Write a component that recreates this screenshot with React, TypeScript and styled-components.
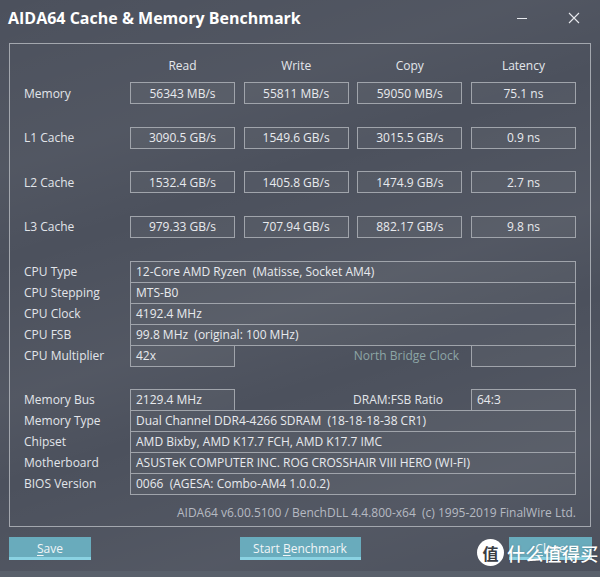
import styled, { createGlobalStyle } from "styled-components"

const GlobalStyle = createGlobalStyle`
    html, body {
        margin: 0;
        padding: 0;
        background: #4d525e;
    }
    body {
        font-family: "Open Sans", "Noto Sans", sans-serif;
    }
`

const Window = styled.div`
    position: relative;
    width: 600px;
    height: 577px;
    overflow: hidden;
    display: flex;
    flex-direction: column;
    color: #e2e5ea;
    font-size: 12px;
    background:
        linear-gradient(162deg, rgba(255,255,255,0) 0%, rgba(255,255,255,0.035) 22%, rgba(255,255,255,0) 34%,
            rgba(255,255,255,0.04) 52%, rgba(255,255,255,0) 63%, rgba(255,255,255,0.045) 82%, rgba(255,255,255,0) 100%),
        #4c515d;
`

const TitleBar = styled.div`
    height: 43px;
    display: flex;
    align-items: flex-start;
    padding: 7px 0 0 8px;
    box-sizing: border-box;
`

const Title = styled.h1`
    flex: 1;
    margin: 0;
    font-size: 16px;
    line-height: 22px;
    font-weight: 700;
    color: #ffffff;
`

const WinButton = styled.div`
    width: 52px;
    height: 22px;
    display: flex;
    align-items: center;
    justify-content: center;
`

const Panel = styled.div`
    margin: 0 9px;
    height: 484px;
    border: 1px solid #a3a7ae;
    box-sizing: border-box;
    padding: 14px 14px 0 14px;
    display: flex;
    flex-direction: column;
`

/* label column + four value columns; the gap after the label is part of its 106px */
const benchColumns = `
    display: grid;
    grid-template-columns: 97.33px repeat(4, 105px);
    column-gap: 8.67px;
`

const HeadRow = styled.div`
    ${benchColumns}
    height: 16px;
    line-height: 16px;
    margin-bottom: 8px;
`

const HeadCell = styled.div`
    text-align: center;
    color: #e4e7ec;
`

const BenchRows = styled.div`
    display: flex;
    flex-direction: column;
    gap: 22.6px;
`

const BenchRow = styled.div`
    ${benchColumns}
    height: 22px;
    align-items: center;
`

const Label = styled.div`
    color: #e2e5ea;
    white-space: nowrap;
`

const ValueBox = styled.div`
    height: 22px;
    box-sizing: border-box;
    border: 1px solid #a0a4ab;
    background: rgba(255,255,255,0.045);
    display: flex;
    align-items: center;
    justify-content: center;
    color: #e8eaee;
    white-space: nowrap;
`

const InfoTable = styled.div<{ $top: number }>`
    display: flex;
    flex-direction: column;
    margin-top: ${p => p.$top}px;
`

const InfoRow = styled.div`
    display: grid;
    grid-template-columns: 106px 105px 1fr 105px;
    height: 22px;
    align-items: center;
    & + & {
        margin-top: -1px;
    }
`

const InfoCell = styled.div<{ $span?: boolean }>`
    grid-column: ${p => (p.$span ? "2 / 5" : "auto")};
    height: 22px;
    box-sizing: border-box;
    border: 1px solid #a0a4ab;
    background: rgba(255,255,255,0.045);
    display: flex;
    align-items: center;
    padding-left: 5px;
    color: #e8eaee;
    white-space: nowrap;
`

const SideLabel = styled.div<{ $muted?: boolean; $pad: number }>`
    text-align: right;
    padding-right: ${p => p.$pad}px;
    color: ${p => (p.$muted ? "#8da6a6" : "#e2e5ea")};
    white-space: nowrap;
`

const Footer = styled.div`
    flex: 1;
    display: flex;
    align-items: center;
    justify-content: flex-end;
    padding-top: 4px;
    color: #b6bac2;
    white-space: nowrap;
`

const ButtonBar = styled.div`
    display: flex;
    justify-content: space-between;
    padding: 10px 8px 0 9px;
`

const Button = styled.div<{ $w: number }>`
    width: ${p => p.$w}px;
    height: 23px;
    box-sizing: border-box;
    background: #69abbc;
    border-bottom: 3px solid #8ad2e2;
    display: flex;
    align-items: center;
    justify-content: center;
    padding-top: 2px;
    color: #f1f5f7;
    font-size: 12px;
    u {
        text-decoration-thickness: 1px;
        text-underline-offset: 2px;
    }
`

const BottomEdge = styled.div`
    margin-top: auto;
    height: 6px;
    background: #59606b;
`

const Watermark = styled.div`
    position: absolute;
    left: 477px;
    top: 539px;
    display: flex;
    align-items: center;
    gap: 3px;
`

const Badge = styled.div`
    width: 27px;
    height: 27px;
    border-radius: 50%;
    background: #ffffff;
    color: #3a3d44;
    display: flex;
    align-items: center;
    justify-content: center;
    font-family: "Noto Sans CJK SC", sans-serif;
    font-size: 16px;
    font-weight: 700;
`

const WatermarkText = styled.div`
    font-family: "Noto Sans CJK SC", sans-serif;
    font-size: 18px;
    font-weight: 500;
    color: #ffffff;
    letter-spacing: 0.3px;
    text-shadow: 0 0 2px rgba(0,0,0,0.25);
`

const benchRows = [
    { name: "Memory", vals: ["56343 MB/s", "55811 MB/s", "59050 MB/s", "75.1 ns"] },
    { name: "L1 Cache", vals: ["3090.5 GB/s", "1549.6 GB/s", "3015.5 GB/s", "0.9 ns"] },
    { name: "L2 Cache", vals: ["1532.4 GB/s", "1405.8 GB/s", "1474.9 GB/s", "2.7 ns"] },
    { name: "L3 Cache", vals: ["979.33 GB/s", "707.94 GB/s", "882.17 GB/s", "9.8 ns"] },
]

const App = (): JSX.Element => {
    return (
        <>
            <GlobalStyle />
            <Window>
                <TitleBar>
                    <Title>AIDA64 Cache &amp; Memory Benchmark</Title>
                    <WinButton>
                        <svg width="12" height="12" viewBox="0 0 12 12">
                            <line x1="1" y1="6.5" x2="11" y2="6.5" stroke="#e8eaee" strokeWidth="1" />
                        </svg>
                    </WinButton>
                    <WinButton>
                        <svg width="12" height="12" viewBox="0 0 12 12">
                            <path d="M1 1 L11 11 M11 1 L1 11" stroke="#e8eaee" strokeWidth="1.1" />
                        </svg>
                    </WinButton>
                </TitleBar>

                <Panel>
                    <HeadRow>
                        <span />
                        <HeadCell>Read</HeadCell>
                        <HeadCell>Write</HeadCell>
                        <HeadCell>Copy</HeadCell>
                        <HeadCell>Latency</HeadCell>
                    </HeadRow>
                    <BenchRows>
                        {benchRows.map(r => (
                            <BenchRow key={r.name}>
                                <Label>{r.name}</Label>
                                {r.vals.map((v, i) => (
                                    <ValueBox key={i}>{v}</ValueBox>
                                ))}
                            </BenchRow>
                        ))}
                    </BenchRows>

                    <InfoTable $top={23}>
                        <InfoRow>
                            <Label>CPU Type</Label>
                            <InfoCell $span>12-Core AMD Ryzen&nbsp; (Matisse, Socket AM4)</InfoCell>
                        </InfoRow>
                        <InfoRow>
                            <Label>CPU Stepping</Label>
                            <InfoCell $span>MTS-B0</InfoCell>
                        </InfoRow>
                        <InfoRow>
                            <Label>CPU Clock</Label>
                            <InfoCell $span>4192.4 MHz</InfoCell>
                        </InfoRow>
                        <InfoRow>
                            <Label>CPU FSB</Label>
                            <InfoCell $span>99.8 MHz&nbsp; (original: 100 MHz)</InfoCell>
                        </InfoRow>
                        <InfoRow>
                            <Label>CPU Multiplier</Label>
                            <InfoCell>42x</InfoCell>
                            <SideLabel $muted $pad={12}>North Bridge Clock</SideLabel>
                            <InfoCell />
                        </InfoRow>
                    </InfoTable>

                    <InfoTable $top={22}>
                        <InfoRow>
                            <Label>Memory Bus</Label>
                            <InfoCell>2129.4 MHz</InfoCell>
                            <SideLabel $pad={28}>DRAM:FSB Ratio</SideLabel>
                            <InfoCell>64:3</InfoCell>
                        </InfoRow>
                        <InfoRow>
                            <Label>Memory Type</Label>
                            <InfoCell $span>Dual Channel DDR4-4266 SDRAM&nbsp; (18-18-18-38 CR1)</InfoCell>
                        </InfoRow>
                        <InfoRow>
                            <Label>Chipset</Label>
                            <InfoCell $span>AMD Bixby, AMD K17.7 FCH, AMD K17.7 IMC</InfoCell>
                        </InfoRow>
                        <InfoRow>
                            <Label>Motherboard</Label>
                            <InfoCell $span>ASUSTeK COMPUTER INC. ROG CROSSHAIR VIII HERO (WI-FI)</InfoCell>
                        </InfoRow>
                        <InfoRow>
                            <Label>BIOS Version</Label>
                            <InfoCell $span>0066&nbsp; (AGESA: Combo-AM4 1.0.0.2)</InfoCell>
                        </InfoRow>
                    </InfoTable>

                    <Footer>AIDA64 v6.00.5100 / BenchDLL 4.4.800-x64&nbsp; (c) 1995-2019 FinalWire Ltd.</Footer>
                </Panel>

                <ButtonBar>
                    <Button $w={82}><span><u>S</u>ave</span></Button>
                    <Button $w={121}><span>Start <u>B</u>enchmark</span></Button>
                    <Button $w={83}><span><u>C</u>lose</span></Button>
                </ButtonBar>

                <BottomEdge />

                <Watermark>
                    <Badge>值</Badge>
                    <WatermarkText>什么值得买</WatermarkText>
                </Watermark>
            </Window>
        </>
    )
}

export default App
